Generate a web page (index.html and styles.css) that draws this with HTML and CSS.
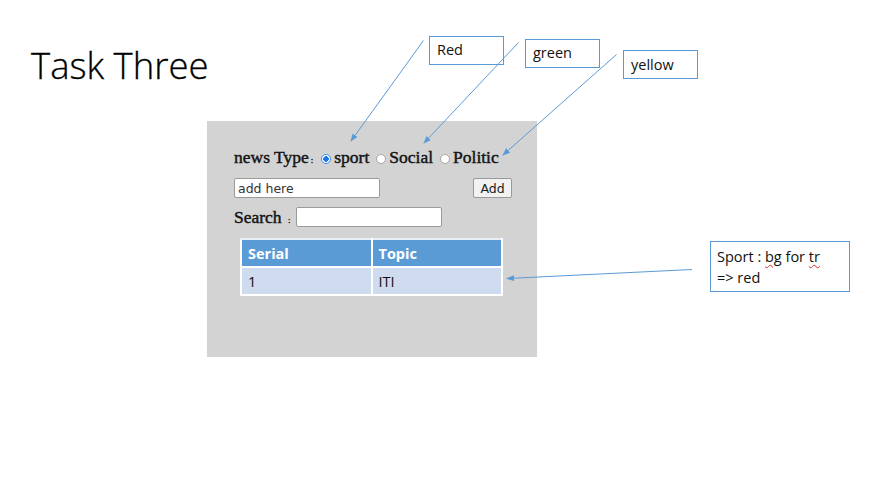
FILE: index.html
```html
<!DOCTYPE html>
<html lang="en">
	<head>
		<meta charset="UTF-8">
		<title>Task Three</title>
		<link rel="stylesheet" href="styles.css">
	</head>
	<body>
		<div class="slide">
			<h1 class="slide-title">Task Three</h1>

			<!-- Demo panel -->
			<div class="panel">
				<div class="type-row">
					<span class="label">news Type<span class="small-colon">:</span></span>
					<label class="choice"><span class="radio checked"></span>sport</label>
					<label class="choice"><span class="radio"></span>Social</label>
					<label class="choice"><span class="radio"></span>Politic</label>
				</div>

				<div class="add-row">
					<input class="text-input" type="text" value="add here">
					<button class="add-btn">Add</button>
				</div>

				<div class="search-row">
					<span class="label">Search <span class="small-colon">:</span></span>
					<input class="text-input" type="text">
				</div>

				<table class="news-table">
					<thead>
						<tr><th>Serial</th><th>Topic</th></tr>
					</thead>
					<tbody>
						<tr><td>1</td><td>ITI</td></tr>
					</tbody>
				</table>
			</div>

			<!-- Callouts -->
			<div class="callout callout-red">Red</div>
			<div class="callout callout-green">green</div>
			<div class="callout callout-yellow">yellow</div>
			<div class="callout callout-sport">Sport : <span class="squiggle">bg</span> for <span class="squiggle">tr</span><br>=&gt; red</div>

			<svg class="arrows" width="876" height="487" viewBox="0 0 876 487">
				<defs>
					<marker id="head" markerWidth="8" markerHeight="8" refX="7" refY="4" orient="auto" markerUnits="userSpaceOnUse">
						<path d="M0,1 L8,4 L0,7 Z" fill="#5b9bd5"/>
					</marker>
				</defs>
				<line x1="423.5" y1="40.5" x2="351" y2="141" marker-end="url(#head)"/>
				<line x1="518.5" y1="42.5" x2="424" y2="143" marker-end="url(#head)"/>
				<line x1="616.5" y1="54.5" x2="503" y2="155" marker-end="url(#head)"/>
				<line x1="692" y1="269.5" x2="507" y2="278.5" marker-end="url(#head)"/>
			</svg>
		</div>
	</body>
</html>
```

FILE: styles.css
```css
body {
	margin: 0;
	background: #fff;
	font-family: "Open Sans", Arial, sans-serif;
}

.slide {
	position: relative;
	width: 876px;
	height: 487px;
	overflow: hidden;
}

.slide-title {
	position: absolute;
	top: 40px;
	left: 31px;
	margin: 0;
	font-family: "Open Sans", sans-serif;
	font-weight: 300;
	font-size: 36.5px;
	color: #000;
	-webkit-text-stroke: 0.3px #000;
}

/* The grey demo box */
.panel {
	position: absolute;
	top: 121px;
	left: 207px;
	width: 303px;
	height: 212px;
	padding: 24px 0 0 27px;
	background: #d3d3d3;
	display: flex;
	flex-direction: column;
}

.label,
.choice {
	font-family: "Liberation Serif", "Times New Roman", serif;
	font-size: 17.5px;
	color: #141414;
	-webkit-text-stroke: 0.45px #141414;
}

.small-colon {
	font-size: 9px;
	margin-left: 2px;
}

.type-row {
	display: flex;
	align-items: center;
	height: 24px;
	width: 278px;
	margin-bottom: 1px;
}

.choice {
	display: flex;
	align-items: center;
	margin-left: 7px;
}

.choice:first-of-type {
	margin-left: 8px;
}

.radio {
	width: 8px;
	height: 8px;
	border-radius: 50%;
	border: 1px solid #a8a8a8;
	background: #fff;
	margin-right: 3px;
	margin-top: 3px;
	box-sizing: content-box;
}

.radio.checked {
	border-color: #3b8ef0;
	background: radial-gradient(circle, #1a73e8 0 2.5px, #fff 3px);
}

.add-row {
	display: flex;
	justify-content: space-between;
	align-items: center;
	width: 278px;
	margin-top: 8px;
}

.text-input {
	width: 146px;
	height: 20px;
	box-sizing: border-box;
	border: 1px solid #9a9a9a;
	border-radius: 2px;
	background: #fff;
	padding: 0 3px;
	font-family: "DejaVu Sans", sans-serif;
	font-size: 12.5px;
	color: #333;
}

.add-btn {
	width: 39px;
	height: 20px;
	padding: 0;
	border: 1px solid #999;
	border-radius: 2px;
	background: #f2f2f2;
	font-family: "DejaVu Sans", sans-serif;
	font-size: 12.5px;
	color: #222;
}

.search-row {
	display: flex;
	align-items: center;
	margin-top: 9px;
	height: 20px;
}

.search-row .label {
	width: 62px;
}

.news-table {
	margin: 11px 0 0 6px;
	width: 263px;
	border-collapse: collapse;
	font-family: "Open Sans", sans-serif;
	font-size: 14.5px;
}

.news-table th,
.news-table td {
	border: 2px solid #fff;
	text-align: left;
	padding: 0 6px;
	height: 28px;
	box-sizing: border-box;
	width: 50%;
}

.news-table thead tr {
	background: #5b9bd5;
}

.news-table th {
	color: #fff;
	font-weight: 700;
	border-top-color: #e8eef8;
}

.news-table td {
	background: #cfdbee;
	color: #111;
}

/* Notes around the slide */
.callout {
	position: absolute;
	box-sizing: border-box;
	border: 1px solid #5b9bd5;
	background: #fff;
	font-family: "Open Sans", sans-serif;
	font-size: 14.5px;
	color: #111;
	padding: 2px 7px;
	line-height: 21px;
}

.callout-red { top: 36px; left: 429px; width: 75px; height: 29px; }
.callout-green { top: 39px; left: 525px; width: 75px; height: 29px; }
.callout-yellow { top: 50px; left: 623px; width: 75px; height: 29px; padding-top: 3px; }
.callout-sport { top: 241px; left: 710px; width: 140px; height: 51px; padding-top: 4px; padding-left: 6px; }

.squiggle {
	text-decoration: underline wavy #e03030;
	text-decoration-thickness: 1px;
	text-underline-offset: 2px;
}

.arrows {
	position: absolute;
	top: 0;
	left: 0;
	pointer-events: none;
}

.arrows line {
	stroke: #5b9bd5;
	stroke-width: 1;
}
```
